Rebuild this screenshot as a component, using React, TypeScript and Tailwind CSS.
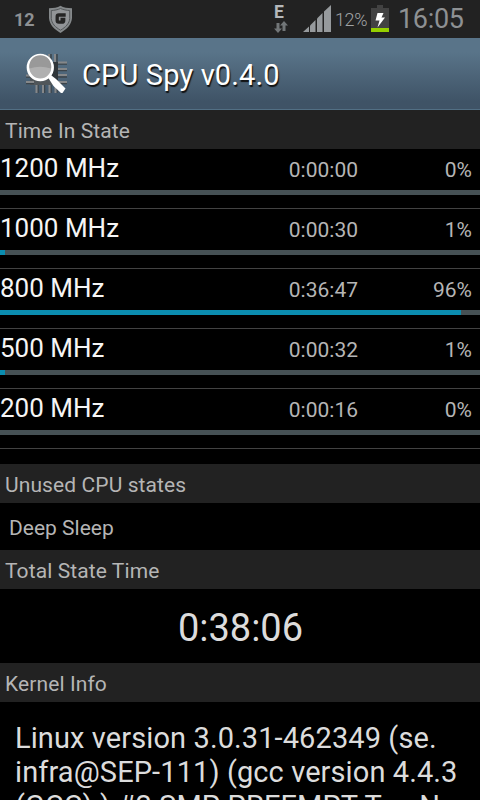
import React from "react";

interface CpuState {
  freq: string;
  time: string;
  percent: number;
}

const states: CpuState[] = [
  { freq: "1200 MHz", time: "0:00:00", percent: 0 },
  { freq: "1000 MHz", time: "0:00:30", percent: 1 },
  { freq: "800 MHz", time: "0:36:47", percent: 96 },
  { freq: "500 MHz", time: "0:00:32", percent: 1 },
  { freq: "200 MHz", time: "0:00:16", percent: 0 },
];

function ShieldIcon() {
  return (
    <svg width="26" height="28" viewBox="0 0 26 28">
      <path
        d="M12.500 0.800C9.500 2.600 5.500 3.200 1 3.300V13C1.300 19.500 6.500 24.500 12.500 28C18.500 24.500 23.700 19.500 24 13V3.300C19.500 3.200 15.500 2.600 12.500 0.800Z"
        fill="#85898b"
      />
      <path
        d="M12.500 3.500C9.500 4.800 6.500 5.400 3.300 5.500V13.500C3.500 18.300 7.500 22.300 12.500 25.200C17.500 22.300 21.500 18.300 21.700 13.500V5.500C18.500 5.400 15.500 4.800 12.500 3.500Z"
        fill="#929598"
        stroke="#54585a"
        strokeWidth="1"
      />
      <path
        d="M17.700 10H10.800Q9.200 10 9.200 11.600V15.600Q9.200 17.200 10.800 17.200H13.900Q15.700 17.200 15.700 15.400V14.300H12.500"
        fill="none"
        stroke="#252525"
        strokeWidth="3.300"
      />
    </svg>
  );
}

function DataIcon() {
  return (
    <svg width="14" height="12" viewBox="0 0 14 12" fill="#727678">
      <path d="M2.500 2H5.500V7.500H8L4 12L0 7.500H2.500Z" />
      <path d="M8.500 10H11.500V4.500H14L10 0L6 4.500H8.500Z" />
    </svg>
  );
}

function SignalIcon() {
  return (
    <svg width="29" height="28" viewBox="0 0 29 28" fill="#969a9d">
      <path d="M0 27L6 21.500V27Z" />
      <path d="M7 20.500L12.500 15V27H7Z" />
      <path d="M14 13.500L19.500 8V27H14Z" />
      <path d="M21 6.500L28 0V27H21Z" />
    </svg>
  );
}

function BatteryIcon() {
  return (
    <svg width="18" height="27" viewBox="0 0 18 27">
      <path d="M6 0H12V3H18V27H0V3H6Z" fill="#424242" />
      <path d="M0 23H18V27H0Z" fill="#96d000" />
      <path d="M6.500 8H12.500L10.500 12.500H14L6.500 22.500L8.500 15.500H4.500Z" fill="#fff" />
    </svg>
  );
}

function SpyIcon() {
  return (
    <svg width="48" height="48" viewBox="0 0 48 48">
      <rect x="8" y="12" width="28" height="23" fill="#50565a" />
      <rect x="30" y="12" width="6" height="18" fill="#30363a" />
      {/* chip pins */}
      <g stroke="#3c444a" strokeWidth="1.500">
        <path d="M22 4V12M29 4V12M35 4V12M36 14H45M36 20.500H45M36 27H45M36 33.500H45M16 35V43M22.500 35V43M29 35V43M35 35V43M4 27H12M4 33.500H12" />
      </g>
      <g stroke="#858789" strokeWidth="2">
        <path d="M20.500 4V12M27 4V12M33 4V12M36 12.500H45M36 19H45M36 25H45M36 32H45M14.500 35V43M21 35V43M27.500 35V43M33.500 35V43M4 25.500H12M4 32H12" />
      </g>
      <circle cx="18.300" cy="17.500" r="12.300" fill="#b0b0b0" stroke="#fff" strokeWidth="2.700" />
      <path d="M7.500 18.500A11 11 0 1 1 29 18.500Q18 15 7.500 18.500Z" fill="#999" />
      <path d="M26 27.500L28.800 25L34 29L43.500 38.500L40.500 43H39L31.500 36Z" fill="#fff" />
    </svg>
  );
}

function SectionHeader({ title }: { title: string }) {
  return (
    <h2 className="h-[39px] bg-[#222] pl-[5px] pt-[2px] text-[21px] leading-[38px] tracking-[0.1px] text-[#b5b5b5]">
      {title}
    </h2>
  );
}

function StateRow({ state }: { state: CpuState }) {
  return (
    <li className="h-[60px] border-b border-[#424242]">
      <div className="flex h-[41px] items-baseline leading-[38px]">
        <span className="w-[240px] text-[26px] text-[#f5f5f5]">{state.freq}</span>
        <span className="w-[118px] text-right text-[21px] text-[#b5b5b5]">{state.time}</span>
        <span className="w-[114px] text-right text-[21px] text-[#b5b5b5]">{state.percent}%</span>
      </div>
      <div className="h-[5px] bg-[#465155]">
        <div className="h-full bg-[#0b8db0]" style={{ width: `${state.percent}%` }} />
      </div>
    </li>
  );
}

export default function App() {
  return (
    <div className="h-[800px] w-[480px] overflow-hidden bg-black font-['Roboto',sans-serif]">
      <div className="flex h-[38px] bg-[#222] text-[#8e9193]">
        <span className="w-[48px] pl-[14px] text-[18px] font-bold leading-[39px]">12</span>
        <div className="w-[225px] pt-[5px]">
          <ShieldIcon />
        </div>
        <div className="w-[30px] pl-px pt-[5px]">
          <div className="h-[16px] text-[17.5px] font-bold leading-[15px] text-[#b5b8ba]">E</div>
          <DataIcon />
        </div>
        <div className="w-[32px] pt-[5px]">
          <SignalIcon />
        </div>
        <span className="w-[36px] text-[18px] font-light leading-[40px] tracking-[-0.4px] text-[#a0a3a5]">12%</span>
        <div className="w-[27px] pt-[5px]">
          <BatteryIcon />
        </div>
        <span className="text-[27px] leading-[38px] tracking-[-0.3px]">16:05</span>
      </div>

      <header className="flex h-[72px] border-b border-[#526f84] bg-linear-to-b from-[#597489] from-20% to-[#3f5366] to-90%">
        <div className="w-[82px] pl-[22px] pt-[12px]">
          <SpyIcon />
        </div>
        <h1 className="text-[29px] leading-[74px] tracking-[0.15px] text-white [text-shadow:1px_2px_1px_#111]">
          CPU Spy v0.4.0
        </h1>
      </header>

      <SectionHeader title="Time In State" />
      <ul className="mb-[15px]">
        {states.map((s) => (
          <StateRow key={s.freq} state={s} />
        ))}
      </ul>

      <SectionHeader title="Unused CPU states" />
      <p className="h-[47px] pl-[9px] text-[21px] leading-[50px] text-[#b5b5b5]">Deep Sleep</p>

      <SectionHeader title="Total State Time" />
      <p className="h-[74px] pl-px text-center text-[38px] leading-[78px] text-[#dcdcdc]">0:38:06</p>

      <SectionHeader title="Kernel Info" />
      <p className="whitespace-nowrap pl-[15px] pt-[19px] text-[29px] leading-[34px] tracking-[0.1px] text-[#dcdcdc]">
        Linux version 3.0.31-462349 (se.
        <br />
        infra@SEP-111) (gcc version 4.4.3
        <br />
        (GCC) ) #2 SMP PREEMPT Tue Nov
      </p>
    </div>
  );
}
